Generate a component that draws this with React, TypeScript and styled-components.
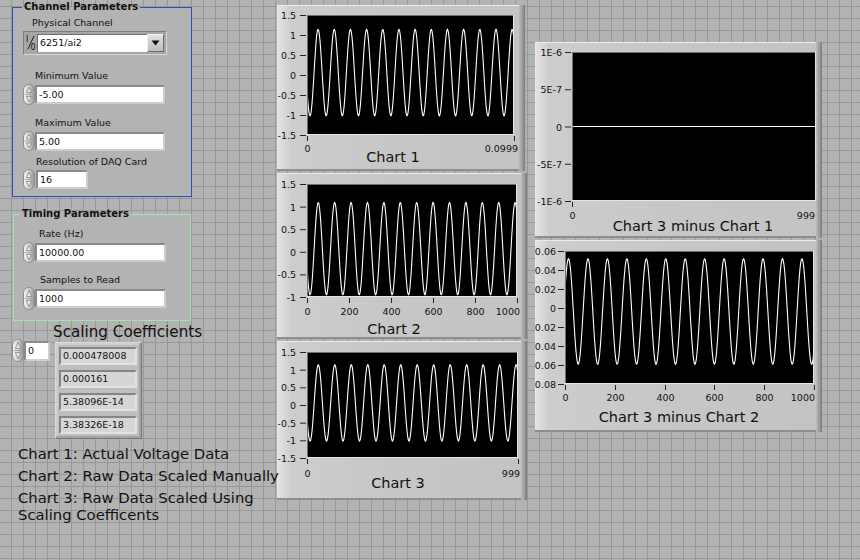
import React from 'react'
import styled, { createGlobalStyle } from 'styled-components'

const GlobalStyle = createGlobalStyle`
  html, body {
    margin: 0;
    padding: 0;
  }
  body {
    background: #b3b3b3;
    font-family: "DejaVu Sans", Verdana, sans-serif;
  }
`

const TAU = Math.PI * 2
const wave = (offset: number, amp: number, phase: number) => (t: number) =>
  offset + amp * Math.sin(TAU * 12.8 * t + phase)

// rough width of a tick label at 9.5px DejaVu Sans
const labelWidth = (s: string) =>
  s.split('').reduce((sum, ch) => sum + (ch === '.' ? 3 : ch === '-' ? 3.4 : 6.05), 0)

type ChartSpec = {
  w: number
  h: number
  plot: [number, number, number, number]
  range: [number, number]
  yLabels: string[]
  xLabels: string[]
  xLabelY: number
  labelGap: number
  title: string
  titleX: number
  titleY: number
  trace: (t: number) => number
}

const middleCharts: ChartSpec[] = [
  {
    w: 248,
    h: 166,
    plot: [30, 10, 207, 120],
    range: [-1.5, 1.5],
    yLabels: ['1.5', '1', '0.5', '0', '-0.5', '-1', '-1.5'],
    xLabels: ['0', '0.0999'],
    xLabelY: 143,
    labelGap: 11,
    title: 'Chart 1',
    titleX: 116,
    titleY: 152,
    trace: wave(0.06, 1.08, -2.737),
  },
  {
    w: 250,
    h: 166,
    plot: [30, 11, 210, 113],
    range: [-1, 1.5],
    yLabels: ['1.5', '1', '0.5', '0', '-0.5', '-1'],
    xLabels: ['0', '200', '400', '600', '800', '1000'],
    xLabelY: 138,
    labelGap: 11,
    title: 'Chart 2',
    titleX: 117,
    titleY: 156,
    trace: wave(0.07, 1.02, -2.737),
  },
  {
    w: 250,
    h: 159,
    plot: [30, 11, 211, 106],
    range: [-1.5, 1.5],
    yLabels: ['1.5', '1', '0.5', '0', '-0.5', '-1', '-1.5'],
    xLabels: ['0', '999'],
    xLabelY: 132,
    labelGap: 11,
    title: 'Chart 3',
    titleX: 121,
    titleY: 142,
    trace: wave(0.06, 1.08, -2.737),
  },
]

const rightCharts: ChartSpec[] = [
  {
    w: 287,
    h: 196,
    plot: [37, 10, 244, 149],
    range: [-1e-6, 1e-6],
    yLabels: ['1E-6', '5E-7', '0', '-5E-7', '-1E-6'],
    xLabels: ['0', '999'],
    xLabelY: 173,
    labelGap: 10,
    title: 'Chart 3 minus Chart 1',
    titleX: 158,
    titleY: 184,
    trace: () => 0,
  },
  {
    w: 287,
    h: 192,
    plot: [30, 11, 249, 133],
    range: [-0.08, 0.06],
    yLabels: ['0.06', '0.04', '0.02', '0', '0.02', '0.04', '0.06', '0.08'],
    xLabels: ['0', '200', '400', '600', '800', '1000'],
    xLabelY: 157,
    labelGap: 9,
    title: 'Chart 3 minus Chart 2',
    titleX: 144,
    titleY: 177,
    trace: wave(-0.0037, 0.0555, 0.44),
  },
]

const coefficients = ['0.000478008', '0.000161', '5.38096E-14', '3.38326E-18']

const Panel = styled.div`
  width: 860px;
  height: 560px;
  overflow: hidden;
  display: flex;
  align-items: flex-start;
  background-color: #b3b3b3;
  background-image: linear-gradient(to right, #989898 1px, transparent 1px),
    linear-gradient(to bottom, #989898 1px, transparent 1px);
  background-size: 12px 12px;
  background-position: 11px 6px;
  color: #111;
`

const LeftColumn = styled.div`
  position: relative;
  z-index: 1;
  flex: none;
  width: 265px;
  padding-left: 12px;
  display: flex;
  flex-direction: column;
  align-items: flex-start;
`

const Group = styled.fieldset<{ $color: string; $w: number; $mt: number; $ml: number; $pb: number }>`
  margin: ${p => p.$mt}px 0 0 ${p => p.$ml}px;
  padding: 0 0 ${p => p.$pb}px 0;
  min-width: 0;
  width: ${p => p.$w}px;
  box-sizing: border-box;
  border: 1px solid ${p => p.$color};
  background: #b3b3b3;
  display: flex;
  flex-direction: column;
  align-items: flex-start;
`

const Legend = styled.legend<{ $ml: number }>`
  margin-left: ${p => p.$ml}px;
  padding: 0 2px;
  font: bold 10px/12px "DejaVu Sans", Verdana, sans-serif;
  color: #111;
`

const Label = styled.div<{ $ml: number; $mt: number }>`
  margin: ${p => p.$mt}px 0 0 ${p => p.$ml}px;
  font-size: 9.5px;
  line-height: 12px;
  white-space: nowrap;
`

const Row = styled.div<{ $ml: number; $mt: number; $gap?: number }>`
  margin: ${p => p.$mt}px 0 0 ${p => p.$ml}px;
  display: flex;
  align-items: center;
  gap: ${p => p.$gap ?? 0}px;
`

const NumBox = styled.div<{ $w: number; $h?: number }>`
  width: ${p => p.$w}px;
  height: ${p => p.$h ?? 19}px;
  box-sizing: border-box;
  border: 2px solid;
  border-color: #8a8a8a #cdcdcd #cdcdcd #8a8a8a;
  background: #fff;
  padding-left: 2px;
  font-size: 9.5px;
  line-height: 15px;
  white-space: nowrap;
`

const Ring = styled.div`
  margin: 2px 0 0 10px;
  width: 144px;
  height: 24px;
  box-sizing: border-box;
  display: flex;
  align-items: center;
  padding: 0 2px 0 1px;
  background: #a6a6a6;
  border: 1px solid;
  border-color: #7c7c7c #d6d6d6 #d6d6d6 #7c7c7c;
`

const RingText = styled.div`
  flex: 1;
  height: 18px;
  box-sizing: border-box;
  background: #fff;
  border-top: 1px solid #6e6e6e;
  border-left: 1px solid #6e6e6e;
  padding-left: 2px;
  font-size: 9.5px;
  line-height: 16px;
`

const RingButton = styled.div`
  width: 17px;
  height: 18px;
  box-sizing: border-box;
  display: flex;
  align-items: center;
  justify-content: center;
  background: linear-gradient(#e2e2e2, #bcbcbc);
  border: 1px solid;
  border-color: #f2f2f2 #6c6c6c #6c6c6c #f2f2f2;
`

const SpinSvg = styled.svg`
  display: block;
  flex: none;
`

const CaptionBig = styled.div<{ $ml: number; $mt: number }>`
  margin: ${p => p.$mt}px 0 0 ${p => p.$ml}px;
  font-size: 15.2px;
  line-height: 16px;
  white-space: nowrap;
`

const ArrayRow = styled.div`
  margin-top: -1px;
  display: flex;
  align-items: flex-start;
`

const ArrayFrame = styled.div`
  margin: 3px 0 0 5px;
  width: 87px;
  height: 97px;
  box-sizing: border-box;
  padding: 4px 0 0 3px;
  display: flex;
  flex-direction: column;
  gap: 5px;
  background: #bebebe;
  border: 1px solid;
  border-color: #dadada #777 #777 #dadada;
  box-shadow: inset -2px -2px 0 #a4a4a4, inset 2px 2px 0 #cecece;
`

const Indicator = styled.div`
  width: 78px;
  height: 18px;
  box-sizing: border-box;
  border: 2px solid;
  border-color: #858585 #e2e2e2 #e2e2e2 #858585;
  background: #d6d6d6;
  padding-left: 2px;
  font-size: 9.5px;
  line-height: 14px;
  white-space: nowrap;
`

const Notes = styled.div`
  margin: 6px 0 0 6px;
  display: flex;
  flex-direction: column;
  gap: 5px;
  font-size: 14.8px;
  line-height: 17px;
  white-space: nowrap;
`

const ChartColumn = styled.div<{ $mt: number; $ml: number; $w: number }>`
  flex: none;
  width: ${p => p.$w}px;
  margin: ${p => p.$mt}px 0 0 ${p => p.$ml}px;
  display: flex;
  flex-direction: column;
  gap: 2px;
`

const ChartFrame = styled.div<{ $w: number; $h: number }>`
  position: relative;
  flex: none;
  width: ${p => p.$w}px;
  height: ${p => p.$h}px;
  overflow: hidden;
  background: linear-gradient(to right, #e4e4e4 0, #cdcdcd 14px, #c6c6c6 50%, #c3c3c3 100%);
  box-shadow: inset 0 1px 0 #ececec, inset 0 -2px 0 #8e8e8e, inset 1px 0 0 #e8e8e8;
  &::after {
    content: '';
    position: absolute;
    top: 0;
    right: 0;
    bottom: 0;
    width: 6px;
    background: linear-gradient(to right, #bcbcbc, #9a9a9a 60%, #767676);
  }
`

const ChartSvg = styled.svg`
  display: block;
  overflow: visible;
`

const TickText = styled.text`
  font-family: "DejaVu Sans", Verdana, sans-serif;
  font-size: 9.5px;
  fill: #111;
`

const TitleText = styled.text`
  font-family: "DejaVu Sans", Verdana, sans-serif;
  font-size: 14.5px;
  fill: #111;
`

const Spinner = ({ h = 21 }: { h?: number }) => {
  const mid = h / 2
  return (
    <SpinSvg width={12} height={h} viewBox={`0 0 12 ${h}`}>
      <defs>
        <linearGradient id="spinFill" x1="0" y1="0" x2="1" y2="0">
          <stop offset="0" stopColor="#f4f4f4" />
          <stop offset="0.5" stopColor="#d2d2d2" />
          <stop offset="1" stopColor="#909090" />
        </linearGradient>
      </defs>
      <rect x={0.5} y={0.5} width={11} height={h - 1} rx={5.5} fill="url(#spinFill)" stroke="#8e8e8e" />
      <line x1={1.5} x2={10.5} y1={mid} y2={mid} stroke="#a0a0a0" strokeWidth={0.8} />
      <path d={`M6 3.2 L8.6 ${mid - 2} H3.4 Z`} fill="#e8e8e8" stroke="#808080" strokeWidth={0.7} />
      <path d={`M6 ${h - 3.2} L8.6 ${mid + 2} H3.4 Z`} fill="#e8e8e8" stroke="#808080" strokeWidth={0.7} />
    </SpinSvg>
  )
}

const IoGlyph = () => (
  <SpinSvg width={12} height={18} viewBox="0 0 12 18">
    <TickText x={1} y={8} style={{ fontSize: 8 }}>I</TickText>
    <line x1={9} y1={2} x2={3} y2={15} stroke="#111" strokeWidth={0.9} />
    <TickText x={5.5} y={16} style={{ fontSize: 8 }}>0</TickText>
  </SpinSvg>
)

const DropArrow = () => (
  <svg width={9} height={6} viewBox="0 0 9 6">
    <path d="M0.5 0.5 H8.5 L4.5 5.5 Z" fill="#111" />
  </svg>
)

const Chart = ({ spec }: { spec: ChartSpec }) => {
  const [px, py, pw, ph] = spec.plot
  const [lo, hi] = spec.range
  const toY = (v: number) => py + ((hi - v) / (hi - lo)) * ph
  const steps = pw * 2
  const points: string[] = []
  for (let i = 0; i <= steps; i++) {
    const t = i / steps
    points.push(`${(px + t * pw).toFixed(2)},${toY(spec.trace(t)).toFixed(2)}`)
  }
  const yStep = ph / (spec.yLabels.length - 1)
  const xStep = pw / (spec.xLabels.length - 1)
  const clipId = `clip-${spec.title.replace(/\s/g, '')}`
  return (
    <ChartFrame $w={spec.w} $h={spec.h}>
      <ChartSvg width={spec.w} height={spec.h}>
        {spec.yLabels.map((label, i) => {
          const y = py + i * yStep
          return (
            <g key={`y${i}`}>
              <line x1={px - 7} x2={px - 1} y1={y + 0.5} y2={y + 0.5} stroke="#222" />
              <TickText x={px - spec.labelGap} y={y + 0.5} textAnchor="end" dominantBaseline="central">
                {label}
              </TickText>
            </g>
          )
        })}
        <rect x={px} y={py} width={pw} height={ph} fill="#000" />
        <line x1={px} x2={px + pw} y1={py + 0.5} y2={py + 0.5} stroke="#707070" />
        <line x1={px + 0.5} x2={px + 0.5} y1={py} y2={py + ph} stroke="#707070" />
        <line x1={px} x2={px + pw} y1={py + ph - 0.5} y2={py + ph - 0.5} stroke="#e6e6e6" />
        <line x1={px + pw - 0.5} x2={px + pw - 0.5} y1={py} y2={py + ph} stroke="#e6e6e6" />
        <clipPath id={clipId}>
          <rect x={px + 1} y={py + 1} width={pw - 2} height={ph - 2} />
        </clipPath>
        <polyline
          points={points.join(' ')}
          fill="none"
          stroke="#fff"
          strokeWidth={1.1}
          clipPath={`url(#${clipId})`}
        />
        {spec.xLabels.map((label, i) => {
          const x = Math.round(px + i * xStep) + 0.5
          const half = labelWidth(label) / 2
          const tx = Math.min(x, spec.w - 7 - half)
          return (
            <g key={`x${i}`}>
              <line x1={x} x2={x} y1={py + ph + 1} y2={py + ph + 6} stroke="#222" />
              <TickText x={tx} y={spec.xLabelY} textAnchor="middle" dominantBaseline="central">
                {label}
              </TickText>
            </g>
          )
        })}
        <TitleText x={spec.titleX} y={spec.titleY} textAnchor="middle" dominantBaseline="central">
          {spec.title}
        </TitleText>
      </ChartSvg>
    </ChartFrame>
  )
}

const App = () => {
  return (
    <Panel>
      <GlobalStyle />
      <LeftColumn>
        <Group $color="#2d4fb8" $w={180} $mt={1} $ml={0} $pb={6}>
          <Legend $ml={9}>Channel Parameters</Legend>
          <Label $ml={19} $mt={4}>Physical Channel</Label>
          <Ring>
            <IoGlyph />
            <RingText>6251/ai2</RingText>
            <RingButton>
              <DropArrow />
            </RingButton>
          </Ring>
          <Label $ml={22} $mt={15}>Minimum Value</Label>
          <Row $ml={10} $mt={2}>
            <Spinner />
            <NumBox $w={130}>-5.00</NumBox>
          </Row>
          <Label $ml={22} $mt={12}>Maximum Value</Label>
          <Row $ml={10} $mt={2}>
            <Spinner h={20} />
            <NumBox $w={130}>5.00</NumBox>
          </Row>
          <Label $ml={23} $mt={5}>Resolution of DAQ Card</Label>
          <Row $ml={10} $mt={1} $gap={1}>
            <Spinner />
            <NumBox $w={52}>16</NumBox>
          </Row>
        </Group>

        <Group $color="#a6e2ae" $w={178} $mt={11} $ml={1} $pb={10}>
          <Legend $ml={6}>Timing Parameters</Legend>
          <Label $ml={25} $mt={8}>Rate (Hz)</Label>
          <Row $ml={9} $mt={2}>
            <Spinner />
            <NumBox $w={131}>10000.00</NumBox>
          </Row>
          <Label $ml={26} $mt={11}>Samples to Read</Label>
          <Row $ml={9} $mt={1}>
            <Spinner h={23} />
            <NumBox $w={131}>1000</NumBox>
          </Row>
        </Group>

        <CaptionBig $ml={41} $mt={3}>Scaling Coefficients</CaptionBig>
        <ArrayRow>
          <Row $ml={0} $mt={0}>
            <Spinner h={23} />
            <NumBox $w={26} $h={20}>0</NumBox>
          </Row>
          <ArrayFrame>
            {coefficients.map(c => (
              <Indicator key={c}>{c}</Indicator>
            ))}
          </ArrayFrame>
        </ArrayRow>

        <Notes>
          <div>Chart 1: Actual Voltage Data</div>
          <div>Chart 2: Raw Data Scaled Manually</div>
          <div>
            Chart 3: Raw Data Scaled Using
            <br />
            Scaling Coefficents
          </div>
        </Notes>
      </LeftColumn>

      <ChartColumn $mt={5} $ml={0} $w={250}>
        {middleCharts.map(spec => (
          <Chart key={spec.title} spec={spec} />
        ))}
      </ChartColumn>

      <ChartColumn $mt={42} $ml={8} $w={287}>
        {rightCharts.map(spec => (
          <Chart key={spec.title} spec={spec} />
        ))}
      </ChartColumn>
    </Panel>
  )
}

export default App
